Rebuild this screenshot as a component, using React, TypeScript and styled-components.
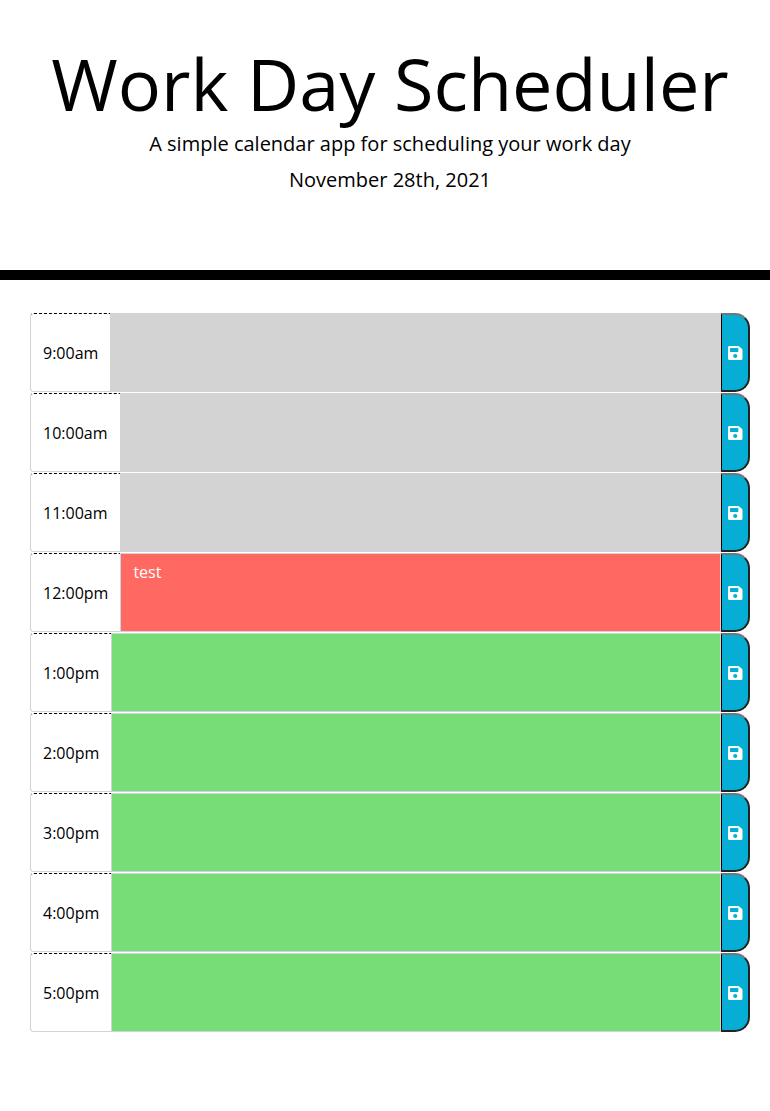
import React from "react";
import styled, { createGlobalStyle } from "styled-components";

const GlobalStyle = createGlobalStyle`
  *, *::before, *::after { box-sizing: border-box; }
  body {
    margin: 0;
    background: #fff;
    color: #000;
    font-family: "Open Sans", sans-serif;
    font-size: 16px;
    line-height: 1.5;
  }
`;

const Header = styled.header`
  height: 280px;
  padding: 34px 20px 0 30px;
  border-bottom: 10px solid #000;
  text-align: center;
`;

const Title = styled.h1`
  margin: 0 0 -3px;
  font-size: 72px;
  font-weight: 400;
  line-height: 98px;
  white-space: nowrap;
`;

const Lead = styled.p`
  margin: 0 0 6px;
  font-size: 20px;
  line-height: 30px;
`;

const Schedule = styled.main`
  display: flex;
  flex-direction: column;
  gap: 1px;
  padding: 33px 20px 0 30px;
`;

const Row = styled.div`
  display: flex;
  height: 79px;
`;

const Hour = styled.span`
  display: flex;
  align-items: center;
  padding: 0 12px;
  border: 1px solid #ced4da;
  border-top: 1px dashed #000;
  border-right: 0;
  border-radius: 4px 0 0 4px;
`;

type Phase = "past" | "present" | "future";
const fills: Record<Phase, string> = { past: "#d3d3d3", present: "#ff6961", future: "#77dd77" };

const Entry = styled.textarea<{ $phase: Phase }>`
  flex: 1;
  min-width: 0;
  margin: 0;
  padding: 6px 12px;
  border: 1px solid ${(p) => (p.$phase === "past" ? "#d3d3d3" : "#ced4da")};
  border-radius: 0;
  outline: 0;
  resize: none;
  background: ${(p) => fills[p.$phase]};
  color: #fff;
  font: inherit;
`;

const SaveButton = styled.button`
  display: flex;
  align-items: center;
  justify-content: center;
  width: 29px;
  padding: 1px 0 0;
  border: 2px solid #222;
  border-top-color: #767676;
  border-left: 1px solid #000;
  border-radius: 0 15px 15px 0;
  background: #06aed5;
  color: #fff;
`;

const SaveIcon = () => (
  <svg width="15" height="16" viewBox="0 0 464 512" preserveAspectRatio="none" fill="currentColor" aria-hidden="true">
    <path d="M433.941 129.941l-83.882-83.882A48 48 0 0 0 316.118 32H48C21.49 32 0 53.49 0 80v352c0 26.51 21.49 48 48 48h352c26.51 0 48-21.49 48-48V163.882a48 48 0 0 0-14.059-33.941zM224 416c-35.346 0-64-28.654-64-64 0-35.346 28.654-64 64-64s64 28.654 64 64c0 35.346-28.654 64-64 64zm96-304.52V212c0 6.627-5.373 12-12 12H76c-6.627 0-12-5.373-12-12V108c0-6.627 5.373-12 12-12h228.52c3.183 0 6.235 1.264 8.485 3.515l3.48 3.48A11.996 11.996 0 0 1 320 111.48z" />
  </svg>
);

const slots: { time: string; phase: Phase; text?: string }[] = [
  { time: "9:00am", phase: "past" },
  { time: "10:00am", phase: "past" },
  { time: "11:00am", phase: "past" },
  { time: "12:00pm", phase: "present", text: "test" },
  { time: "1:00pm", phase: "future" },
  { time: "2:00pm", phase: "future" },
  { time: "3:00pm", phase: "future" },
  { time: "4:00pm", phase: "future" },
  { time: "5:00pm", phase: "future" },
];

export default function App() {
  return (
    <>
      <GlobalStyle />
      <Header>
        <Title>Work Day Scheduler</Title>
        <Lead>A simple calendar app for scheduling your work day</Lead>
        <Lead>November 28th, 2021</Lead>
      </Header>
      <Schedule>
        {slots.map((s) => (
          <Row key={s.time}>
            <Hour>{s.time}</Hour>
            <Entry $phase={s.phase} defaultValue={s.text} aria-label={s.time} />
            <SaveButton aria-label="Save">
              <SaveIcon />
            </SaveButton>
          </Row>
        ))}
      </Schedule>
    </>
  );
}
